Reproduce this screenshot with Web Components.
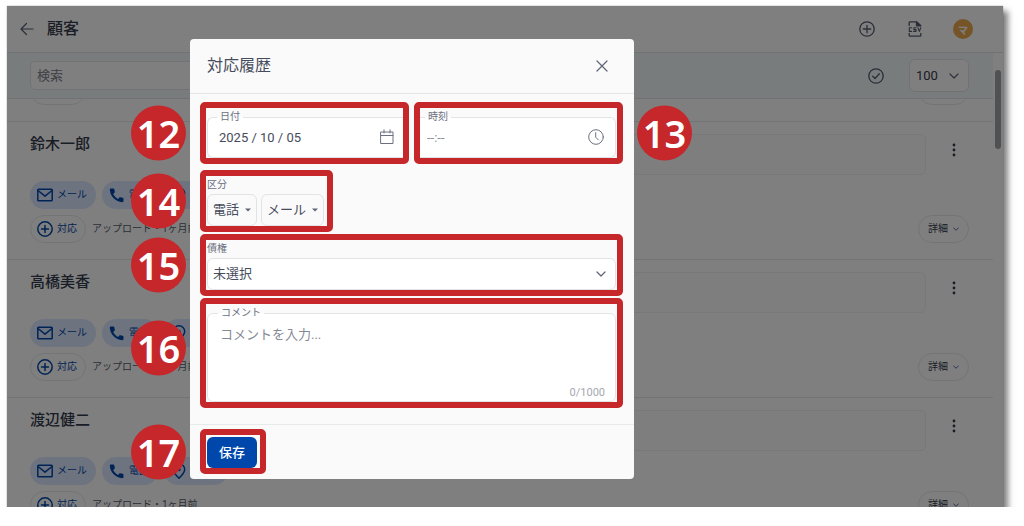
<!DOCTYPE html>
<html lang="ja">
<head>
<meta charset="utf-8">
<meta name="viewport" content="width=device-width, initial-scale=1">
<title>顧客 - 対応履歴</title>
<style>
  body { margin: 0; background: #fff; font-family: Roboto, "Noto Sans CJK JP", sans-serif; color: #333a4d; }
</style>
</head>
<body>
<app-window>
  <app-header slot="top" heading="顧客"></app-header>
  <search-bar slot="top"></search-bar>
  <customer-record></customer-record>
  <customer-record name="鈴木一郎"></customer-record>
  <customer-record name="高橋美香"></customer-record>
  <customer-record name="渡辺健二"></customer-record>
  <history-dialog slot="dialog" heading="対応履歴">
    <field-row>
      <step-mark number="12"><outlined-field class="start" label="日付" value="2025 / 10 / 05" icon="calendar"></outlined-field></step-mark>
      <step-mark number="13" side="right"><outlined-field class="end" label="時刻" value="--:--" icon="clock" muted></outlined-field></step-mark>
    </field-row>
    <step-mark number="14" fit>
      <labelled-group label="区分">
        <drop-down label="電話" look="compact">電話</drop-down>
        <drop-down label="メール" look="compact">メール</drop-down>
      </labelled-group>
    </step-mark>
    <step-mark number="15">
      <labelled-group label="債権"><drop-down label="債権" look="wide">未選択</drop-down></labelled-group>
    </step-mark>
    <step-mark number="16" class="comment"><comment-field label="コメント"></comment-field></step-mark>
    <step-mark slot="footer" number="17" fit><save-button>保存</save-button></step-mark>
  </history-dialog>
</app-window>

<script>
const svg = (w, h, box, body) =>
  `<svg width="${w}" height="${h}" viewBox="${box}" fill="none" stroke="currentColor" stroke-linecap="round" stroke-linejoin="round" aria-hidden="true">${body}</svg>`;

const ICONS = {
  back: svg(14, 14, '0 0 14 14', '<path stroke-width="1.200" d="M13 7H1.2M6.500 1.500L1 7l5.500 5.500"/>'),
  plus: svg(16, 16, '0 0 16 16', '<g stroke-width="1.300"><circle cx="8" cy="8" r="7.200"/><path d="M8 4.300v7.400M4.300 8h7.400"/></g>'),
  plusBold: svg(16, 16, '0 0 16 16', '<g stroke-width="1.500"><circle cx="8" cy="8" r="7.200"/><path d="M8 4.500v7M4.500 8h7"/></g>'),
  check: svg(16, 16, '0 0 16 16', '<g stroke-width="1.300"><circle cx="8" cy="8" r="7.200"/><path d="M4.700 8.300l2.300 2.200 4.300-4.700"/></g>'),
  csv: svg(16, 16, '0 0 16 16', '<g stroke-width="1.300"><path d="M2.200 4.500V1.600a.8.800 0 0 1 .8-.8h6.500l4.300 4M2.200 12.500v1.900a.8.800 0 0 0 .8.800h10a.8.800 0 0 0 .8-.8v-1.900"/><path d="M9.500 1v3.800h4z" fill="currentColor"/><path d="M4.700 6.800H2.300v3.600h2.400M9 6.800H6.900v1.800H9v1.800H6.700M10.900 6.800l1.400 3.600 1.500-3.600" stroke-width="1.100"/></g>'),
  mail: svg(16, 16, '0 0 16 16', '<g stroke-width="1.500"><rect x=".8" y="2.300" width="14.400" height="11.400" rx=".8"/><path d="M1 3.500l7 5.700 7-5.700"/></g>'),
  phone: svg(16, 16, '0 0 16 16', '<path stroke="none" fill="currentColor" d="M2 1.500C1.300 1.500.8 2 .8 2.700 1.300 9.500 6.500 14.700 13.300 15.200c.7 0 1.200-.5 1.200-1.200v-2.300c0-.5-.4-.9-.9-1l-2.300-.4c-.4-.1-.7.100-1 .3l-1.200 1.300C6.800 10.800 5.200 9.200 4.200 7l1.300-1.200c.3-.3.400-.6.300-1L5.400 2.400c-.1-.5-.5-.9-1-.9z"/>'),
  pin: svg(16, 16, '0 0 16 16', '<path stroke-width="1.500" d="M8 15.300C4.500 11.800 2.300 9.400 2.300 6.500a5.700 5.700 0 0 1 11.400 0c0 2.900-2.200 5.300-5.700 8.800z"/><circle cx="8" cy="6.500" r="1.700" fill="currentColor" stroke="none"/>'),
  kebab: svg(4, 14, '0 0 4 14', '<g fill="currentColor" stroke="none"><circle cx="2" cy="2" r="1.400"/><circle cx="2" cy="7" r="1.400"/><circle cx="2" cy="12" r="1.400"/></g>'),
  chevron: svg(10, 10, '0 0 10 10', '<path stroke-width="1.200" d="M1 3l4 4 4-4"/>'),
  chevronSmall: svg(6, 6, '0 0 6 6', '<path d="M.5 1.800L3 4.300l2.500-2.500"/>'),
  caret: svg(6, 6, '0 0 6 6', '<path d="M0 1.500h6L3 4.600z" fill="currentColor" stroke="none"/>'),
  close: svg(12, 12, '0 0 12 12', '<path stroke-width="1.200" d="M1 1l10 10M11 1L1 11"/>'),
  calendar: svg(14, 16, '0 0 14 16', '<path d="M1 3h12v11.500H1zM1 6.500h12M4 .8V4M10 .8V4"/>'),
  clock: svg(16, 16, '0 0 16 16', '<circle cx="8" cy="8" r="7.300"/><path d="M7.700 3.700v4.500l2.800 2.800"/>')
};

const RESET = `
  *, *::before, *::after { box-sizing: border-box; }
  svg { display: block; flex: none; }
  button, input, textarea, select { font: inherit; color: inherit; margin: 0; padding: 0; border: 0; background: none; outline: 0; }
`;

class Base extends HTMLElement {
  connectedCallback() {
    if (this.shadowRoot) return;
    this.attachShadow({ mode: 'open' }).innerHTML = `<style>${RESET}${this.css()}</style>${this.html()}`;
    this.ready();
  }
  ready() {}
  attr(name) { return this.getAttribute(name) || ''; }
}
const define = (name, css, html, ready) => customElements.define(name, class extends Base {
  css() { return css; }
  html() { return html(this); }
  ready() { if (ready) ready(this); }
});

define('app-window', `
  :host { display: flex; flex-direction: column; box-sizing: border-box; position: relative; height: calc(100vh - 25px); margin: 6px 21px 0 7px; background: #fff; box-shadow: 5px 5px 6px rgba(0,0,0,.5), 0 0 1px rgba(0,0,0,.5); }
  main { flex: 1; min-height: 0; overflow: hidden; padding-right: 10px; }
  .bar { position: absolute; z-index: 1; top: 64px; right: 2px; width: 6px; height: 79px; border-radius: 3px; background: #a0a2a5; }
  .shade { position: absolute; z-index: 2; inset: 0; background: rgba(0,0,0,.5); }
  .layer { position: absolute; z-index: 3; top: 33px; left: 183px; width: 444px; }
`, () => `
  <slot name="top"></slot>
  <main><slot></slot></main>
  <div class="bar"></div>
  <div class="shade"></div>
  <div class="layer"><slot name="dialog"></slot></div>
`, el => {
  // The list opens scrolled to just before the end of its first record.
  const list = el.shadowRoot.querySelector('main');
  requestAnimationFrame(() => { list.scrollTop = 115; });
  addEventListener('load', () => { list.scrollTop = 115; });
});

define('app-header', `
  :host { display: block; }
  header { display: flex; align-items: center; height: 47px; padding: 0 28px 0 13px; border-bottom: 1px solid #e2e5e8; }
  h1 { flex: 1; margin: 0 0 0 13px; font-size: 16px; line-height: 24px; font-weight: 500; }
  nav { display: flex; gap: 24px; align-items: center; }
  button { display: grid; place-items: center; width: 24px; height: 24px; color: #565c70; }
  .back { width: 14px; }
  .avatar { width: 20px; height: 20px; margin: 0 2px; border-radius: 50%; background: #eba94f; color: #fff; font-size: 10px; font-weight: 700; }
`, el => `
  <header>
    <button class="back" aria-label="戻る">${ICONS.back}</button>
    <h1>${el.attr('heading')}</h1>
    <nav>
      <button aria-label="追加">${ICONS.plus}</button>
      <button aria-label="出力">${ICONS.csv}</button>
      <button class="avatar">マ</button>
    </nav>
  </header>
`);

define('search-bar', `
  :host { display: block; margin-right: 10px; }
  form { display: flex; align-items: center; height: 46px; padding: 0 24px 0 23px; background: #f3f8fb; border-bottom: 1px solid #e2e5e8; }
  input { width: 40%; height: 29px; padding: 0 6px; border: 1px solid #e2e5e8; border-radius: 5px; background: #fff; font-size: 13px; }
  input::placeholder { color: #7c828c; opacity: 1; }
  button { display: grid; place-items: center; width: 24px; height: 24px; margin: 0 21px 0 auto; color: #565c70; }
`, () => `
  <form>
    <input type="search" placeholder="検索" aria-label="検索">
    <button type="button" aria-label="選択">${ICONS.check}</button>
    <drop-down label="表示件数" look="count">100</drop-down>
  </form>
`);

define('customer-record', `
  :host { display: block; }
  article { display: flex; flex-direction: column; gap: 6px; height: 138px; padding: 11px 24px 0 23px; border-bottom: 1px solid #e6e8eb; }
  .top { display: flex; height: 42px; padding-top: 1px; }
  h2 { flex: 1; margin: 0; font-size: 15px; line-height: 20px; font-weight: 500; }
  .memo { flex: none; width: 42%; border: 1px solid #f0f1f3; border-radius: 5px; background: #fdfdfe; }
  .menu { display: grid; place-items: center; flex: none; width: 24px; height: 32px; margin: 0 3px 0 16px; }
  .row { display: flex; align-items: center; gap: 6px; font-size: 10px; line-height: 16px; }
  button.pill { display: flex; align-items: center; gap: 4px; height: 28px; padding: 0 9px 0 7px; border-radius: 14px; color: #0047ab; }
  .soft { background: #dce8ff; }
  .place { width: 64px; }
  button.line { border: 1px solid #e6e8eb; padding: 0 8px 0 6px; }
  button.more { margin-left: auto; padding: 0 9px; gap: 5px; color: #333a4d; }
  .more svg { color: #5c61a8; }
  .note { color: #555c6b; }
`, el => `
  <article>
    <div class="top">
      <h2>${el.attr('name')}</h2>
      <div class="memo"></div>
      <button class="menu" aria-label="メニュー">${ICONS.kebab}</button>
    </div>
    <div class="row">
      <button class="pill soft">${ICONS.mail}メール</button>
      <button class="pill soft">${ICONS.phone}電話</button>
      <button class="pill soft place" aria-label="地図">${ICONS.pin}</button>
    </div>
    <div class="row">
      <button class="pill line">${ICONS.plusBold}対応</button>
      <span class="note">アップロード・1ヶ月前</span>
      <button class="pill line more">詳細${ICONS.chevronSmall}</button>
    </div>
  </article>
`);

define('history-dialog', `
  :host { display: block; background: #fafafa; border-radius: 4px; color: #464c5c; }
  header { display: flex; align-items: center; justify-content: space-between; height: 55px; padding: 0 20px 0 17px; border-bottom: 1px solid #e3e4e6; }
  h2 { margin: 0; font-size: 16px; line-height: 24px; font-weight: 400; }
  button { display: grid; place-items: center; width: 24px; height: 24px; color: #5e6475; }
  .body { display: grid; grid-template-columns: minmax(0, 1fr); gap: 2px; padding: 8px 11px 16px 10px; }
  footer { padding: 4px 10px 5px; border-top: 1px solid #e8e9eb; }
`, el => `
  <section role="dialog" aria-label="${el.attr('heading')}">
    <header><h2>${el.attr('heading')}</h2><button aria-label="閉じる">${ICONS.close}</button></header>
    <div class="body"><slot></slot></div>
    <footer><slot name="footer"></slot></footer>
  </section>
`);

define('field-row', `
  :host { display: grid; grid-template-columns: repeat(2, minmax(0, 1fr)); gap: 5px; margin-bottom: 4px; }
`, () => `<slot></slot>`);

define('step-mark', `
  :host { display: block; box-sizing: border-box; position: relative; border: 6px solid #c5272b; border-radius: 5px; min-height: 45px; padding: 0 1px; }
  :host([fit]) { width: fit-content; padding-right: 3px; }
  :host([slot=footer]) { padding-top: 2px; }
  b { position: absolute; z-index: 1; top: 50%; left: -75px; transform: translateY(-50%); width: 55px; height: 55px; border-radius: 50%; background: #c5272b; color: #fff; text-align: center; font: 600 38px/55px "Noto Sans", sans-serif; }
  :host([side=right]) b { left: auto; right: -75px; }
  :host(.comment) b { top: 45%; }
`, el => `<slot></slot><b>${el.attr('number')}</b>`);

const FIELDSET = `
  fieldset { min-width: 0; margin: 0; border: 1px solid #e2e3e6; border-radius: 6px; background: #fff; }
  legend { padding: 0 3px; font-size: 10px; line-height: 14px; color: #6b7080; }
  label { display: block; }
`;

define('outlined-field', `
  :host { display: block; padding-top: 2px; }
  ${FIELDSET}
  fieldset { height: 48px; padding: 0 8px 0 11px; }
  legend { margin-left: -2px; }
  :host(.start) { margin-right: -1px; }
  :host(.start) fieldset { border-right: 0; border-radius: 6px 0 0 6px; }
  :host(.end) { margin-left: -1px; }
  :host(.end) fieldset { border-left: 0; border-radius: 0 6px 6px 0; padding: 0 11px 0 7px; }
  :host([muted]) input { color: #8b8f9b; }
  .inner { display: flex; align-items: center; height: 26px; }
  input { flex: 1; min-width: 0; height: 24px; font-size: 13px; }
  button { display: grid; place-items: center; width: 16px; height: 24px; color: #6b7080; }
`, el => `
  <fieldset>
    <legend><label for="f">${el.attr('label')}</label></legend>
    <div class="inner">
      <input id="f" type="text" value="${el.attr('value')}">
      <button aria-label="${el.attr('label')}を選択">${ICONS[el.attr('icon')]}</button>
    </div>
  </fieldset>
`);

define('comment-field', `
  :host { display: block; padding-top: 2px; }
  ${FIELDSET}
  fieldset { height: 96px; padding: 0 10px; }
  textarea { display: block; width: 100%; height: 66px; padding: 5px 2px 0; resize: none; font-size: 13px; line-height: 20px; }
  textarea::placeholder { color: #858995; opacity: 1; }
  output { display: block; font-size: 11px; line-height: 14px; text-align: right; color: #a5a8b0; }
`, el => `
  <fieldset>
    <legend><label for="f">${el.attr('label')}</label></legend>
    <textarea id="f" placeholder="コメントを入力..." maxlength="1000"></textarea>
    <output for="f">0/1000</output>
  </fieldset>
`);

define('labelled-group', `
  :host { display: block; height: 50px; }
  span { display: block; font-size: 10px; line-height: 18px; color: #6b7080; }
  div { display: flex; gap: 4px; }
`, el => `
  <span>${el.attr('label')}</span>
  <div role="group" aria-label="${el.attr('label')}"><slot></slot></div>
`);

define('drop-down', `
  :host { display: grid; align-items: center; --h: 32px; --l: 5px; --r: 16px; --e: 6px; }
  :host([look=wide]) { flex: 1; --r: 30px; --e: 10px; }
  :host([look=count]) { --h: 33px; --l: 6px; --r: 30px; --e: 10px; width: 60px; }
  select { grid-area: 1 / 1; width: 100%; height: var(--h); appearance: none; padding: 0 var(--r) 0 var(--l); border: 1px solid #e2e3e6; border-radius: 6px; font-size: 13px; line-height: 20px; }
  :host([look=wide]) select, :host([look=count]) select { background: #fff; }
  svg { grid-area: 1 / 1; justify-self: end; margin-right: var(--e); color: #5e6475; pointer-events: none; }
`, el => `
  <select aria-label="${el.attr('label')}"><option>${el.textContent.trim()}</option></select>
  ${el.attr('look') === 'compact' ? ICONS.caret : ICONS.chevron}
`);

define('save-button', `
  :host { display: block; }
  button { display: block; width: 50px; height: 31px; border-radius: 6px; background: #0047ab; color: #fff; font-size: 13px; font-weight: 500; line-height: 31px; }
`, () => `<button type="submit"><slot></slot></button>`);
</script>
</body>
</html>
